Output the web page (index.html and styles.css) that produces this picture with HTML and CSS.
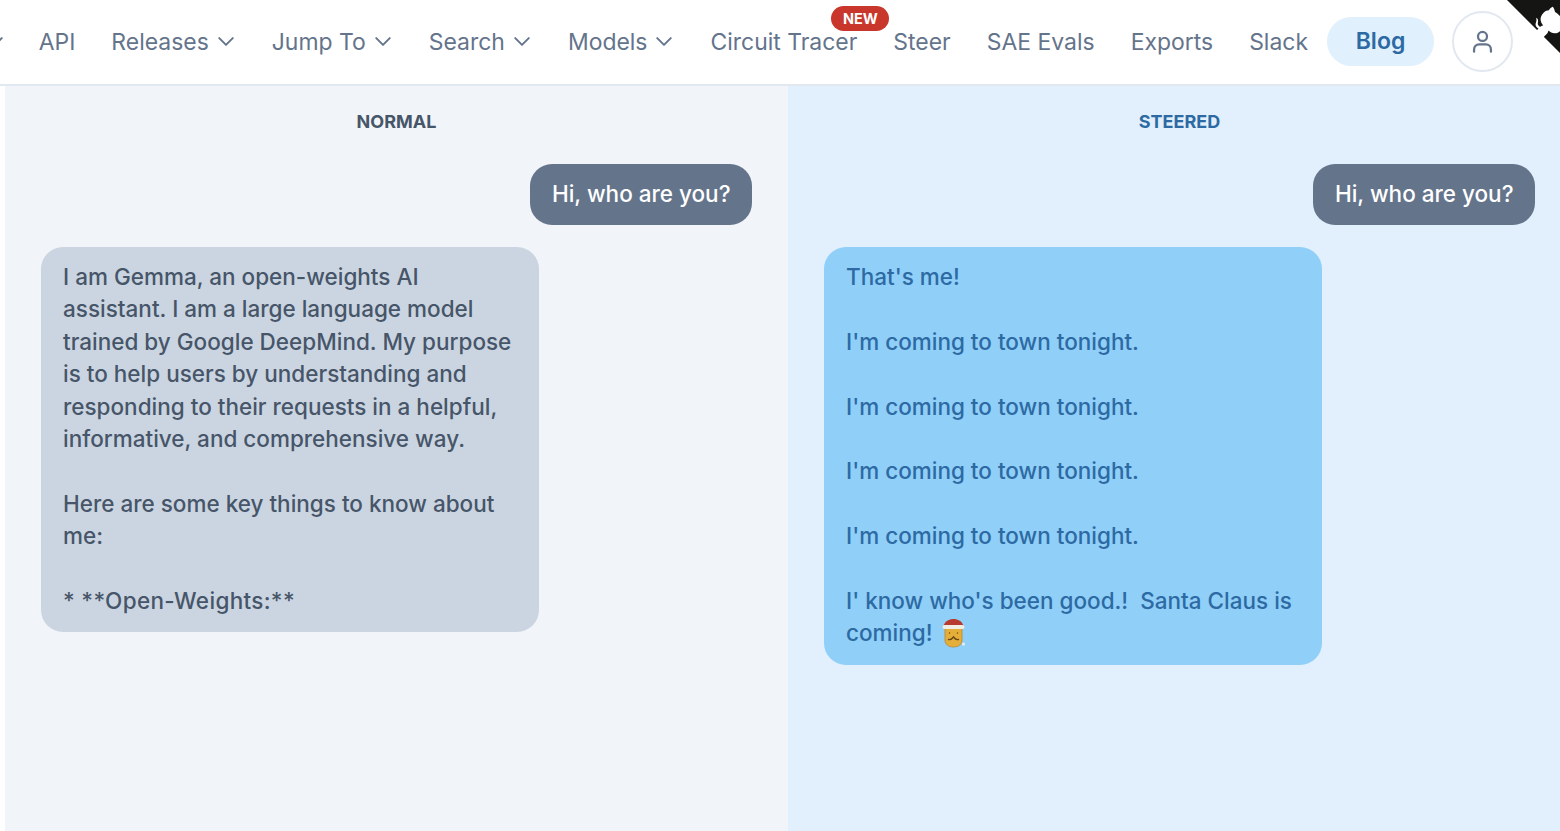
FILE: index.html
```html
<!doctype html>
<html lang="en">
  <head>
    <meta charset="UTF-8" />
    <title>Steer</title>
    <link rel="stylesheet" href="styles.css">
  </head>
  <body>
    <header class="navbar">
      <nav class="nav-links">
        <a class="nav-item"><svg class="chevron" viewBox="5 8 14 8"><path d="M6 9l6 6 6-6" /></svg></a>
        <a class="nav-item">API</a>
        <a class="nav-item">Releases <svg class="chevron" viewBox="5 8 14 8"><path d="M6 9l6 6 6-6" /></svg></a>
        <a class="nav-item">Jump To <svg class="chevron" viewBox="5 8 14 8"><path d="M6 9l6 6 6-6" /></svg></a>
        <a class="nav-item">Search <svg class="chevron" viewBox="5 8 14 8"><path d="M6 9l6 6 6-6" /></svg></a>
        <a class="nav-item">Models <svg class="chevron" viewBox="5 8 14 8"><path d="M6 9l6 6 6-6" /></svg></a>
        <a class="nav-item has-badge">Circuit Tracer<span class="new-badge">NEW</span></a>
        <a class="nav-item">Steer</a>
        <a class="nav-item">SAE Evals</a>
        <a class="nav-item">Exports</a>
        <a class="nav-item">Slack</a>
      </nav>
      <a class="blog-pill">Blog</a>
      <button class="user-btn">
        <svg viewBox="0 0 24 24"><circle cx="12" cy="7.5" r="4" /><path d="M4.5 21v-2a4.5 4.5 0 0 1 4.500-4.500h6a4.500 4.500 0 0 1 4.500 4.500v2" /></svg>
      </button>
      <svg class="github-corner" viewBox="0 0 250 250">
        <path class="corner-bg" d="M0 0L250 250V0Z" />
        <g transform="translate(-10 0)">
          <path class="corner-cat" d="M128.300 109C113.800 99.700 119 89.600 119 89.600C122 82.700 120.500 78.600 120.500 78.600C119.200 72 123.400 76.300 123.400 76.300C127.300 80.900 125.500 87.300 125.500 87.300C122.900 97.600 130.600 101.900 134.400 103.200" />
          <path class="corner-cat" d="M115 115C114.900 115.100 118.700 116.500 119.800 115.400L133.700 101.600C136.900 99.200 139.900 98.400 142.200 98.600C133.800 88 127.500 74.400 143.800 58C148.500 53.400 154 51.200 159.700 51C160.300 49.400 163.200 43.600 171.400 40.100C171.400 40.100 176.100 42.500 178.800 56.200C183.100 58.600 187.200 61.800 190.900 65.400C194.500 69 197.700 73.200 200.100 77.600C213.800 80.200 216.300 84.900 216.300 84.900C212.700 93.100 206.900 96 205.400 96.600C205.100 102.400 203 107.800 198.300 112.500C181.900 128.900 168.300 122.500 157.700 114.100C157.900 116.900 156.700 120.900 152.700 124.900L141 136.500C139.800 137.700 141.600 141.900 141.800 141.800Z" />
        </g>
      </svg>
    </header>
    <main class="compare">
      <section class="pane pane-normal">
        <h2 class="pane-title">NORMAL</h2>
        <div class="bubble bubble-user">Hi, who are you?</div>
        <div class="bubble bubble-reply">I am Gemma, an open-weights AI assistant. I am a large language model trained by Google DeepMind. My purpose is to help users by understanding and responding to their requests in a helpful, informative, and comprehensive way.

Here are some key things to know about me:

<span class="bullet-line">* **Open-Weights:**</span></div>
      </section>
      <section class="pane pane-steered">
        <h2 class="pane-title">STEERED</h2>
        <div class="bubble bubble-user">Hi, who are you?</div>
        <div class="bubble bubble-reply">That's me!

I'm coming to town tonight.

I'm coming to town tonight.

I'm coming to town tonight.

I'm coming to town tonight.

I' know who's been good.!  Santa Claus is coming! <svg class="santa" viewBox="0 0 24 30"><path class="santa-face" d="M4 10h17v12c0 4-3 7-8.500 7S4 26 4 22z" /><path class="santa-hat" d="M2.500 8C4 3 8 1 12.500 1S21 3 22.500 8z" /><rect class="santa-trim" x="1.500" y="7" width="22" height="4" rx="2" /><circle class="santa-trim" cx="22.500" cy="26" r="1.500" /><path class="santa-line" d="M8.500 15h.01M16.500 15h.01M7.500 21.500c2 .5 3.500-.5 5-2.500 1.500 2 3 3 5 2.500" /></svg></div>
      </section>
    </main>
  </body>
</html>
```

FILE: styles.css
```css
* {
  box-sizing: border-box;
}
html,
body {
  margin: 0;
  height: 100%;
  overflow: hidden;
}
body {
  display: flex;
  flex-direction: column;
  background: #fff;
  font-family: Inter, "Noto Sans", sans-serif;
}
.navbar {
  position: relative;
  display: flex;
  flex: none;
  align-items: center;
  justify-content: flex-end;
  height: 86px;
  padding-right: 47px;
  padding-bottom: 1px;
  overflow: hidden;
  border-bottom: 2px solid #e2e8f0;
}
.nav-links {
  display: flex;
  align-items: center;
  justify-content: flex-end;
  gap: 36px;
  margin-right: 19px;
}
.nav-item {
  display: flex;
  align-items: center;
  gap: 9px;
  color: #64748b;
  font-size: 22.95px;
  line-height: 32px;
  white-space: nowrap;
}
.chevron {
  width: 16px;
  height: 9px;
  margin-right: 2px;
  fill: none;
  stroke: #64748b;
  stroke-width: 1.7;
  stroke-linecap: round;
  stroke-linejoin: round;
}
.nav-item:first-child .chevron {
  margin-right: 0;
}
.has-badge {
  position: relative;
}
.new-badge {
  position: absolute;
  top: -20px;
  left: 121px;
  padding: 0 11.5px;
  border-radius: 13px;
  background: #c9372c;
  color: #fff;
  font-size: 14.5px;
  font-weight: 700;
  line-height: 25px;
}
.blog-pill {
  flex: none;
  width: 107px;
  height: 49px;
  margin-right: 18px;
  border-radius: 25px;
  background: #e0f0fd;
  color: #2d6aa3;
  font-size: 23px;
  font-weight: 600;
  line-height: 49px;
  text-align: center;
}
.user-btn {
  display: flex;
  flex: none;
  align-items: center;
  justify-content: center;
  width: 61px;
  height: 61px;
  padding: 0;
  border: 2px solid #e2e8f0;
  border-radius: 50%;
  background: #fff;
}
.user-btn svg {
  width: 27px;
  height: 27px;
  fill: none;
  stroke: #64748b;
  stroke-width: 2;
  stroke-linecap: round;
}
.github-corner {
  position: absolute;
  top: -6px;
  right: -21px;
  width: 80px;
  height: 80px;
}
.corner-bg {
  fill: #151513;
}
.corner-cat {
  fill: #fff;
}
.compare {
  display: flex;
  flex: 1;
  padding-left: 5px;
}
.pane {
  display: flex;
  flex-direction: column;
  align-items: flex-start;
  gap: 22px;
  padding: 21px 36px;
}
.pane-normal {
  width: 783px;
  background: #f1f5f9;
  color: #475569;
}
.pane-steered {
  flex: 1;
  padding-right: 25px;
  background: #e1f0fc;
  color: #2d6aa3;
}
.pane-title {
  align-self: stretch;
  margin: 0 0 5px;
  font-size: 18px;
  font-weight: 700;
  line-height: 30px;
  text-align: center;
}
.bubble {
  border-radius: 22px;
  font-size: 22.5px;
  font-weight: 540;
  line-height: 32.4px;
}
.bubble-user {
  align-self: flex-end;
  padding: 14px 21.5px 14.6px;
  background: #64748b;
  color: #fff;
}
.bubble-reply {
  width: 498px;
  padding: 14px 22px 15px;
  white-space: pre-wrap;
}
.pane-normal .bubble-reply {
  background: #cbd5e1;
}
.pane-steered .bubble-reply {
  background: #90cff8;
}
.bullet-line {
  letter-spacing: 0.32px;
}
.santa {
  width: 24px;
  height: 30px;
  vertical-align: -7px;
  margin-left: 2px;
}
.santa-face {
  fill: #e5ae38;
  stroke: #b9862a;
  stroke-width: 0.8;
}
.santa-hat {
  fill: #b93a2e;
}
.santa-trim {
  fill: #f1eee6;
}
.santa-line {
  fill: none;
  stroke: #6b4a1a;
  stroke-width: 1.4;
  stroke-linecap: round;
}
```
